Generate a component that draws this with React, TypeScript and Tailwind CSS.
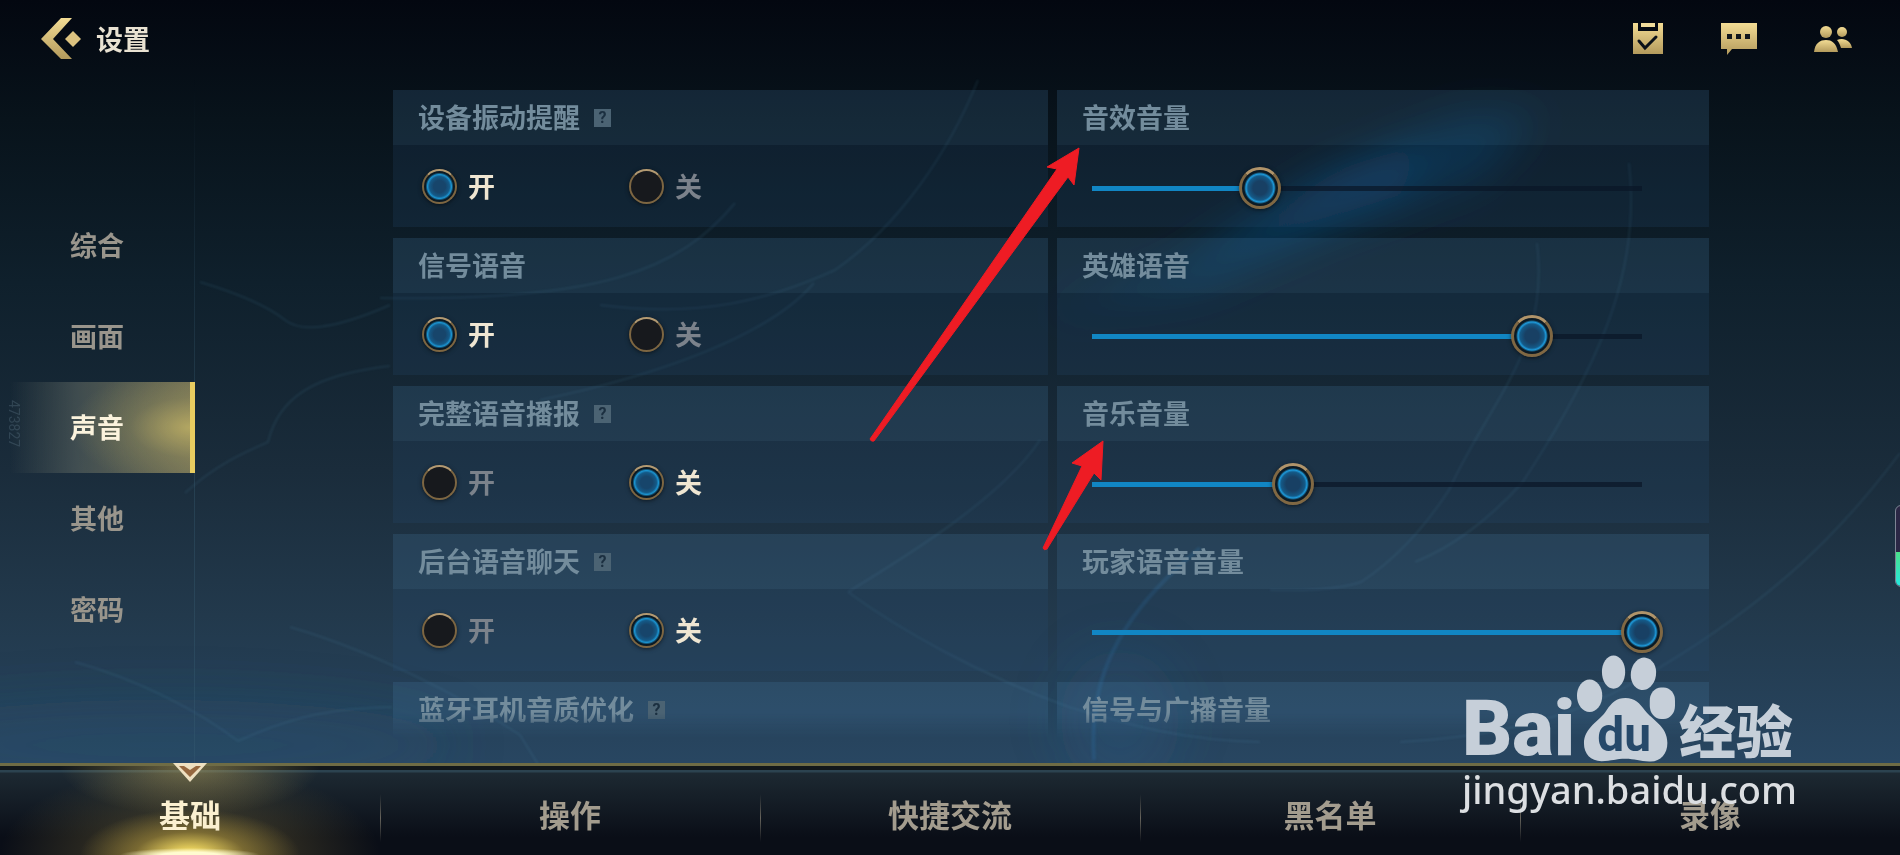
import React, { useState } from 'react';

interface ToggleSetting {
  id: string;
  label: string;
  help: boolean;
  on: boolean;
}

interface VolumeSetting {
  id: string;
  label: string;
  value: number;
}

const sections = ['综合', '画面', '声音', '其他', '密码'];
const tabs = ['基础', '操作', '快捷交流', '黑名单', '录像'];

const initialToggles: ToggleSetting[] = [
  { id: 'vibration', label: '设备振动提醒', help: true, on: true },
  { id: 'signal', label: '信号语音', help: false, on: true },
  { id: 'broadcast', label: '完整语音播报', help: true, on: false },
  { id: 'background', label: '后台语音聊天', help: true, on: false },
];

const initialVolumes: VolumeSetting[] = [
  { id: 'effects', label: '音效音量', value: 30.5 },
  { id: 'hero', label: '英雄语音', value: 80 },
  { id: 'music', label: '音乐音量', value: 36.5 },
  { id: 'player', label: '玩家语音音量', value: 100 },
];

const BackIcon: React.FC = () => (
  <svg width="40" height="44" viewBox="0 0 40 44" aria-hidden="true">
    <defs>
      <linearGradient id="gold" x1="0" y1="0" x2="0" y2="1">
        <stop offset="0" stopColor="#f3dc94" />
        <stop offset="1" stopColor="#b39a5c" />
      </linearGradient>
    </defs>
    <path d="M20 1H31L12 22L31 42H20L0 22Z" fill="url(#gold)" />
    <path d="M32 14L40 22L32 30L24 22Z" fill="#dcc380" />
  </svg>
);

const TaskIcon: React.FC = () => (
  <svg width="32" height="32" viewBox="0 0 32 32" aria-hidden="true">
    <path d="M1 0H6V8H26V0H31V31H1Z" fill="url(#gold)" />
    <rect x="9" y="0" width="14" height="4" fill="#f0dc9c" />
    <path d="M7 18L13 25L24 14" fill="none" stroke="#0a1119" strokeWidth="3" strokeLinecap="round" />
  </svg>
);

const ChatIcon: React.FC = () => (
  <svg width="36" height="32" viewBox="0 0 36 32" aria-hidden="true">
    <path d="M0 0H36V26H11L6 32V26H0Z" fill="url(#gold)" />
    <path d="M6 11H11V16H6ZM15 11H20V16H15ZM24 11H29V16H24Z" fill="#10161b" />
  </svg>
);

const FriendsIcon: React.FC = () => (
  <svg width="38" height="28" viewBox="0 0 38 28" aria-hidden="true">
    <g fill="url(#gold)">
      <circle cx="12" cy="7" r="6" />
      <path d="M0 27C1 18 6 15 12 15S22 18 24 27Z" />
      <circle cx="28" cy="7" r="5" />
      <path d="M23 15C30 12 37 16 38 23H27C26 20 25 17 23 15Z" />
    </g>
  </svg>
);

const Backdrop: React.FC = () => (
  <svg
    className="pointer-events-none absolute inset-0 h-full w-full"
    viewBox="0 0 1900 855"
    preserveAspectRatio="none"
    aria-hidden="true"
  >
    <defs>
      <filter id="soft" x="-50%" y="-50%" width="200%" height="200%">
        <feGaussianBlur stdDeviation="26" />
      </filter>
      <filter id="beam" x="-20%" y="-60%" width="140%" height="220%">
        <feGaussianBlur stdDeviation="20" />
      </filter>
      <filter id="line" x="-5%" y="-5%" width="110%" height="110%">
        <feGaussianBlur stdDeviation="1" />
      </filter>
    </defs>
    <g filter="url(#soft)">
      <ellipse cx="1120" cy="720" rx="60" ry="70" fill="#2a6ba6" opacity=".15" />
      <ellipse cx="160" cy="745" rx="300" ry="45" fill="#2a5a78" opacity=".2" />
    </g>
    <g filter="url(#beam)" fill="#0f5288">
      <path d="M1040 315L1190 262L1330 175L1460 115L1540 115L1480 180L1350 225L1200 290Z" opacity=".34" />
      <path d="M1160 278L1330 172L1430 140L1400 195L1290 230Z" opacity=".4" />
    </g>
    <g fill="none" stroke="#5b9fc0" strokeWidth="2" opacity=".12" filter="url(#line)">
      <path d="M185 493C215 465 245 452 268 442C278 400 310 375 390 366" />
      <path d="M200 282Q260 300 285 320T390 305" />
      <path d="M75 662C140 680 200 712 238 741C280 722 320 708 392 707" />
      <path d="M290 627C370 650 460 695 520 735L560 800" />
      <path d="M978 80C950 150 900 225 835 270C770 300 700 318 600 305" />
      <path d="M814 283C770 335 660 375 540 400" />
      <path d="M735 203C680 270 600 302 380 298" />
      <path d="M1629 163C1640 260 1610 350 1522 483Q1470 540 1415 562" />
      <path d="M1537 243C1550 350 1490 400 1449 490Q1410 550 1361 582Q1330 592 1270 590" />
      <path d="M1900 453C1850 520 1780 600 1633 683Q1540 735 1400 742" />
      <path d="M848 592C900 630 980 675 1069 707C1130 725 1180 740 1260 742" />
      <path d="M848 592C900 560 1000 500 1040 440" />
    </g>
    <path
      d="M1094 760C1090 700 1100 630 1200 548"
      fill="none"
      stroke="#2f80bd"
      strokeWidth="4"
      opacity=".2"
      filter="url(#line)"
    />
  </svg>
);

const Arrows: React.FC = () => (
  <svg
    className="pointer-events-none absolute inset-0 h-full w-full"
    viewBox="0 0 1900 855"
    preserveAspectRatio="none"
    aria-hidden="true"
  >
    <g fill="#ee1c24" stroke="#ee1c24" strokeWidth="1" strokeLinejoin="round">
      <path d="M1079 148L1047 167L1057 169L870 439Q871 442 874 441L1068 177L1074 185Z" />
      <path d="M1103 441L1072 463L1082 466L1043 548Q1044 551 1047 549L1094 473L1101 480Z" />
    </g>
  </svg>
);

const Watermark: React.FC = () => (
  <div className="pointer-events-none absolute right-[103px] bottom-[40px] text-[#c6cfd9]">
    <div className="flex items-end">
      <span className="w-[112px] font-['Roboto'] text-[78px] leading-[68px] font-black">Bai</span>
      <svg className="mx-px" width="103" height="110" viewBox="520 155 310 330">
        <g fill="#c6cfd9">
          <ellipse cx="564" cy="283" rx="38" ry="49" />
          <ellipse cx="636" cy="212" rx="35" ry="50" />
          <ellipse cx="726" cy="217" rx="38" ry="49" transform="rotate(8 726 217)" />
          <rect x="745" y="258" width="76" height="95" rx="34" ry="40" />
          <path d="M672 290C700 290 715 306 730 327C752 356 798 375 798 425C798 458 778 480 748 481C718 482 700 473 672 473S630 480 600 480C567 480 547 458 547 427C547 378 595 360 615 327C630 304 645 290 672 290Z" />
        </g>
        <text x="668" y="450" textAnchor="middle" fill="#26496a" fontFamily="Roboto" fontWeight="700" fontSize="144">
          du
        </text>
      </svg>
      <span className="text-[57px] leading-[70px] font-black">经验</span>
    </div>
    <p className="font-['Noto_Sans'] text-[38px] leading-[52px] font-medium text-[#dcdfe2]">jingyan.baidu.com</p>
  </div>
);

const CardHeader: React.FC<{ label: string; help?: boolean }> = ({ label, help }) => (
  <div className="flex h-[55px] items-center gap-[14px] bg-[#4a80b0]/20 px-[25px] text-[27px] font-bold text-[#738c9c]">
    <h2>{label}</h2>
    {help && (
      <button
        type="button"
        aria-label={`${label}说明`}
        className="flex h-[18px] w-[17px] items-center justify-center bg-[#4b6373] font-['Roboto'] text-base leading-none font-bold text-[#1b2f40]"
      >
        ?
      </button>
    )}
  </div>
);

const radioClass =
  'size-[35px] shrink-0 appearance-none rounded-full border-2 border-[#7d6642] border-t-[#b39a72] bg-[#17191d] shadow-[0_1px_4px_#0008] checked:bg-[radial-gradient(circle,#17456b_0_6px,#145a88_10px,#1b93d0_12px,#0b1a24_14px)]';

const sliderClass =
  '[grid-area:1/1] h-[42px] w-full appearance-none bg-transparent [&::-webkit-slider-thumb]:size-[42px] [&::-webkit-slider-thumb]:appearance-none [&::-webkit-slider-thumb]:rounded-full [&::-webkit-slider-thumb]:border-3 [&::-webkit-slider-thumb]:border-[#806843] [&::-webkit-slider-thumb]:border-t-[#b0946a] [&::-webkit-slider-thumb]:bg-[radial-gradient(circle,#184064_0_7px,#145a88_12px,#1e9bdc_14px,#0b1a24_16px)] [&::-webkit-slider-thumb]:shadow-[0_1px_4px_#0008]';

const App: React.FC = () => {
  const [section, setSection] = useState<string>('声音');
  const [tab, setTab] = useState<string>('基础');
  const [toggles, setToggles] = useState<ToggleSetting[]>(initialToggles);
  const [volumes, setVolumes] = useState<VolumeSetting[]>(initialVolumes);

  const handleToggle = (id: string, on: boolean) => {
    setToggles((prev) => prev.map((t) => (t.id === id ? { ...t, on } : t)));
  };

  const handleVolume = (id: string, e: React.ChangeEvent<HTMLInputElement>) => {
    const value = Number(e.target.value);
    setVolumes((prev) => prev.map((v) => (v.id === id ? { ...v, value } : v)));
  };

  return (
    <div className="relative flex h-screen flex-col overflow-hidden bg-[linear-gradient(to_bottom,#030710_0%,#08131b_14%,#0f202c_33%,#1a2c3b_55%,#22394c_72%,#284661_89%)] font-['Noto_Sans_CJK_SC',sans-serif]">
      <Backdrop />

      <header className="relative flex h-[78px] shrink-0 items-center justify-between pr-[48px] pl-[41px]">
        <button type="button" className="flex items-center gap-[15px] text-[27px] font-bold text-[#e9e2d2]">
          <BackIcon />
          设置
        </button>
        <div className="flex items-center gap-[57px]">
          <button type="button" aria-label="任务">
            <TaskIcon />
          </button>
          <button type="button" aria-label="聊天">
            <ChatIcon />
          </button>
          <button type="button" aria-label="好友">
            <FriendsIcon />
          </button>
        </div>
      </header>

      <main className="relative flex min-h-0 flex-1">
        <nav className="w-[195px] shrink-0 bg-[linear-gradient(to_bottom,transparent,#3a607559_50%,#3a607559)] bg-[length:1px_100%] bg-right bg-no-repeat pt-[122px]">
          {sections.map((name) => (
            <button
              key={name}
              type="button"
              onClick={() => setSection(name)}
              className={
                name === section
                  ? 'flex h-[91px] w-full items-center border-r-5 border-[#e8cc60] bg-[radial-gradient(ellipse_120px_60px_at_right,#d0be68b3,#d0be6833_50%,transparent),linear-gradient(to_right,transparent_5%,#5a646099_40%,#85805ccc)] pl-[70px] text-[27px] font-bold text-[#fbf3dd]'
                  : 'flex h-[91px] w-full items-center pl-[70px] text-[27px] font-bold text-[#99958c]'
              }
            >
              {name}
            </button>
          ))}
        </nav>
        <span className="absolute top-[322px] left-1 font-['Roboto'] text-sm text-[#6b8496]/30 [writing-mode:vertical-rl]">
          473827
        </span>

        <div className="mt-3 mr-[191px] ml-[198px] grid flex-1 auto-rows-min grid-cols-[655fr_652fr] gap-x-[9px] gap-y-[11px] overflow-hidden [mask-image:linear-gradient(to_bottom,black_calc(100%-50px),transparent_calc(100%-24px))]">
          {toggles.map((toggle, i) => (
            <React.Fragment key={toggle.id}>
              <section>
                <CardHeader label={toggle.label} help={toggle.help} />
                <div className="flex h-[82px] items-center bg-[#28507a]/20 pl-[29px] text-[27px] font-bold">
                  <label
                    className={`flex w-[207px] items-center gap-[11px] ${toggle.on ? 'text-[#efe6d2]' : 'text-[#7b828b]'}`}
                  >
                    <input
                      type="radio"
                      name={toggle.id}
                      checked={toggle.on}
                      onChange={() => handleToggle(toggle.id, true)}
                      className={radioClass}
                    />
                    开
                  </label>
                  <label
                    className={`flex w-[207px] items-center gap-[11px] ${toggle.on ? 'text-[#7b828b]' : 'text-[#efe6d2]'}`}
                  >
                    <input
                      type="radio"
                      name={toggle.id}
                      checked={!toggle.on}
                      onChange={() => handleToggle(toggle.id, false)}
                      className={radioClass}
                    />
                    关
                  </label>
                </div>
              </section>
              <section>
                <CardHeader label={volumes[i].label} />
                <div className="grid h-[82px] items-center bg-[#28507a]/20 pt-1 pr-[46px] pl-[14px]">
                  <div className="mx-[21px] h-[5px] bg-[#0a1726]/70 [grid-area:1/1]">
                    <div className="h-full bg-[#1186c4]" style={{ width: `${volumes[i].value}%` }} />
                  </div>
                  <input
                    type="range"
                    min={0}
                    max={100}
                    step={0.5}
                    value={volumes[i].value}
                    onChange={(e) => handleVolume(volumes[i].id, e)}
                    aria-label={volumes[i].label}
                    className={sliderClass}
                  />
                </div>
              </section>
            </React.Fragment>
          ))}
          <CardHeader label="蓝牙耳机音质优化" help />
          <CardHeader label="信号与广播音量" />
        </div>
      </main>

      <footer className="relative flex h-[92px] shrink-0 border-t-3 border-[#6f6c45] bg-[linear-gradient(to_bottom,#12171a_4px,#2c4350_4px_6px,#1d2932_7px,#0a0e17_80%)]">
        {tabs.map((name) => (
          <button
            key={name}
            type="button"
            onClick={() => setTab(name)}
            className={
              name === tab
                ? 'relative flex-1 bg-[radial-gradient(ellipse_70px_7px_at_50%_100%,#fffbd0_40%,transparent),radial-gradient(ellipse_110px_46px_at_50%_100%,#f0d860_10%,#a8903c90_50%,transparent),radial-gradient(ellipse_190px_90px_at_50%_100%,#7d6c3899,transparent),radial-gradient(ellipse_130px_50px_at_50%_0%,#a8985a99,transparent)] pt-2 text-[31px] font-bold text-[#fbf0d0]'
                : 'relative flex-1 pt-2 text-[31px] font-bold text-[#a39c8e] before:absolute before:top-[28px] before:left-0 before:h-[48px] before:w-px before:bg-[linear-gradient(to_bottom,transparent,#67645c,transparent)]'
            }
          >
            {name === tab && (
              <svg
                className="absolute -top-[3px] left-1/2 -translate-x-1/2"
                width="34"
                height="19"
                viewBox="0 0 34 19"
                aria-hidden="true"
              >
                <path d="M0 0H34L17 19Z" fill="#eee0c0" />
                <path d="M6 3H11L17 7L23 3H28L17 14Z" fill="#96683f" />
              </svg>
            )}
            {name}
          </button>
        ))}
      </footer>

      <div className="absolute top-[505px] -right-[30px] flex h-[82px] w-[35px] flex-col justify-end overflow-hidden rounded-md border border-[#7d8594] bg-[#2b2745]">
        <div className="h-[34px] bg-[linear-gradient(to_bottom,#4ae08a,#25e8e0)]" />
      </div>

      <Arrows />
      <Watermark />
    </div>
  );
};

export default App;
